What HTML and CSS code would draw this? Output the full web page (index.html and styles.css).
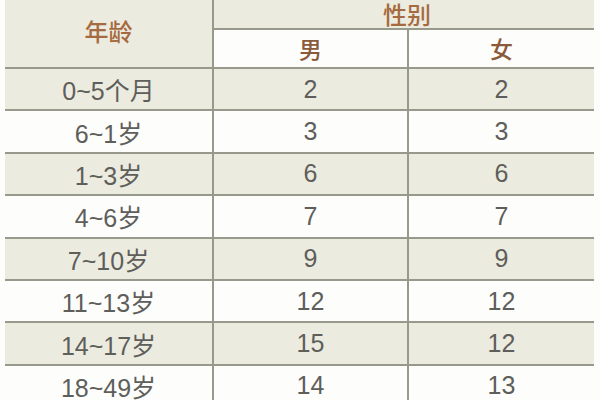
FILE: index.html
```html
<!DOCTYPE html>
<html lang="zh">
<head>
<meta charset="utf-8">
<link rel="stylesheet" href="styles.css">
</head>
<body>
<div class="table">
  <div class="head">
    <div class="cell age">年龄</div>
    <div class="sex">
      <div class="sex-title">性别</div>
      <div class="sub">
        <div class="cell mid">男</div>
        <div class="cell right">女</div>
      </div>
    </div>
  </div>
  <div class="row shade"><div class="cell left">0~5个月</div><div class="cell mid">2</div><div class="cell right">2</div></div>
  <div class="row"><div class="cell left">6~1岁</div><div class="cell mid">3</div><div class="cell right">3</div></div>
  <div class="row shade"><div class="cell left">1~3岁</div><div class="cell mid">6</div><div class="cell right">6</div></div>
  <div class="row"><div class="cell left">4~6岁</div><div class="cell mid">7</div><div class="cell right">7</div></div>
  <div class="row shade"><div class="cell left">7~10岁</div><div class="cell mid">9</div><div class="cell right">9</div></div>
  <div class="row"><div class="cell left">11~13岁</div><div class="cell mid">12</div><div class="cell right">12</div></div>
  <div class="row shade"><div class="cell left">14~17岁</div><div class="cell mid">15</div><div class="cell right">12</div></div>
  <div class="row"><div class="cell left">18~49岁</div><div class="cell mid">14</div><div class="cell right">13</div></div>
</div>
</body>
</html>
```
FILE: styles.css
```css
html, body {
  margin: 0;
  padding: 0;
  background: #fdfdfb;
}
body {
  font-family: "Liberation Sans", "Noto Sans CJK SC", sans-serif;
  font-size: 25px;
  color: #5e5e5a;
  overflow: hidden;
  height: 400px;
}
.table {
  margin-left: 5px;
  width: 589px;
}
.head {
  display: flex;
  background: #ecebe0;
  border-bottom: 2px solid #979a8a;
  height: 69px;
  box-sizing: border-box;
}
.cell {
  display: flex;
  align-items: center;
  justify-content: center;
  box-sizing: border-box;
}
.age {
  width: 209px;
  border-right: 2px solid #979a8a;
  color: #a66a40;
  font-family: "Noto Sans CJK SC", sans-serif;
  font-weight: 500;
  font-size: 24px;
  padding-bottom: 7px;
}
.sex {
  flex: 1;
  display: flex;
  flex-direction: column;
}
.sex-title {
  height: 30px;
  box-sizing: border-box;
  border-bottom: 2px solid #979a8a;
  color: #a66a40;
  font-family: "Noto Sans CJK SC", sans-serif;
  font-weight: 500;
  font-size: 24px;
  text-align: center;
  line-height: 27px;
  padding-left: 6px;
}
.sub {
  flex: 1;
  display: flex;
  background: #fdfdfb;
}
.sub .cell {
  color: #8a5a3a;
  font-family: "Noto Sans CJK SC", sans-serif;
  font-weight: 500;
  font-size: 23px;
  padding-bottom: 2px;
}
.row {
  display: flex;
  height: 42.4px;
  box-sizing: border-box;
  border-bottom: 2px solid #979a8a;
  background: #fdfdfb;
}
.row.shade {
  background: #ecebe0;
}
.left {
  width: 209px;
  border-right: 2px solid #979a8a;
}
.mid {
  width: 195px;
  border-right: 2px solid #979a8a;
}
.right {
  flex: 1;
}
```
